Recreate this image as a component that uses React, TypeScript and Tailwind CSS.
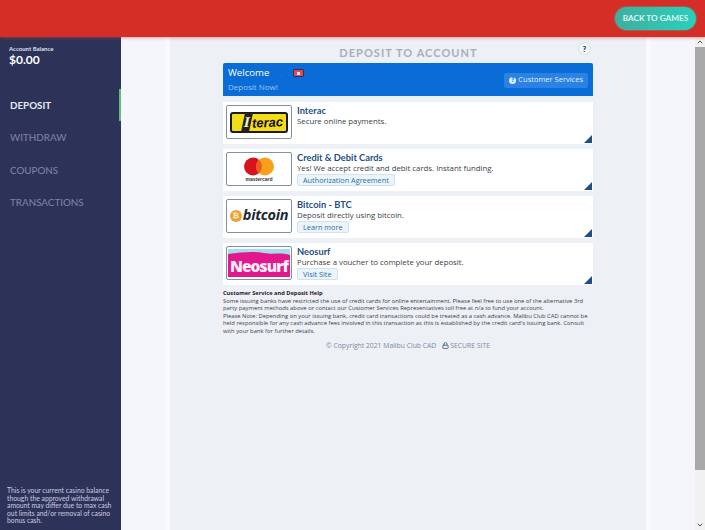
import React from 'react';
import { Lock, ChevronUp, ChevronDown } from 'lucide-react';

const navItems = [
  { label: 'DEPOSIT', active: true },
  { label: 'WITHDRAW', active: false },
  { label: 'COUPONS', active: false },
  { label: 'TRANSACTIONS', active: false },
];

const InteracLogo = () => (
  <div className="flex h-[21px] w-[58px] items-center justify-center gap-[1px] rounded-[3px] border-2 border-[#1b1b1b] bg-[#f5dc18] pl-[9px]">
    <span className="relative z-10 -my-[2px] flex h-[19px] w-[8px] shrink-0 -skew-x-12 items-center justify-center bg-[#222] font-['Liberation_Serif',serif] text-[15px] leading-none font-bold text-[#f4f0c0]">I</span>
    <span className="-rotate-3 font-['Liberation_Sans',sans-serif] text-[13px] leading-none font-bold text-[#111] italic">terac</span>
  </div>
);

const MastercardLogo = () => (
  <div className="flex flex-col items-center">
    <svg width="32" height="19" viewBox="0 0 32 19">
      <circle cx="10" cy="9.5" r="9" fill="#d6141c" />
      <circle cx="22" cy="9.5" r="9" fill="#f7a01b" />
      <path d="M16 2.8a9 9 0 0 1 0 13.4a9 9 0 0 1 0-13.4z" fill="#ee5a1c" />
    </svg>
    <span className="mt-[1px] font-['Liberation_Sans',sans-serif] text-[5px] leading-none font-bold text-[#333]">mastercard</span>
  </div>
);

const BitcoinLogo = () => (
  <div className="flex items-center gap-[1px]">
    <div className="flex h-[12px] w-[12px] items-center justify-center rounded-full bg-[#e8a33d] font-['Liberation_Sans',sans-serif] text-[8px] leading-none font-bold text-[#fbe6c2]">₿</div>
    <span className="-mt-[1px] font-['Open_Sans',sans-serif] text-[14.5px] leading-none font-bold tracking-[-0.3px] text-[#1d2a33] italic">bitcoin</span>
  </div>
);

const NeosurfLogo = () => (
  <div className="flex h-[28px] w-[62px] flex-col overflow-hidden">
    <svg width="62" height="12" viewBox="0 0 62 12" className="shrink-0">
      <rect width="62" height="12" fill="#e2188c" />
      <path d="M0 0H62V6C52 3 46 6 36 4C26 2 14 3 0 5Z" fill="#a8dcec" />
    </svg>
    <div className="flex flex-1 items-start justify-center bg-[#e2188c]">
      <span className="-mt-[5px] font-['Open_Sans',sans-serif] text-[15.5px] leading-[20px] font-extrabold tracking-[-0.9px] text-[#fdeef7]">Neosurf</span>
    </div>
  </div>
);

const methods = [
  { title: 'Interac', text: 'Secure online payments.', logo: <InteracLogo />, button: '' },
  { title: 'Credit & Debit Cards', text: 'Yes! We accept credit and debit cards. Instant funding.', logo: <MastercardLogo />, button: 'Authorization Agreement' },
  { title: 'Bitcoin - BTC', text: 'Deposit directly using bitcoin.', logo: <BitcoinLogo />, button: 'Learn more' },
  { title: 'Neosurf', text: 'Purchase a voucher to complete your deposit.', logo: <NeosurfLogo />, button: 'Visit Site' },
];

export default function App() {
  return (
    <div className="flex h-[530px] w-[705px] flex-col overflow-hidden bg-[#f4f6fb] font-['Open_Sans',sans-serif]">
      {/* Header */}
      <header className="relative z-10 flex h-[37px] shrink-0 items-center justify-end bg-[#d42e27] pr-[9px] shadow-[0_1px_3px_rgba(200,80,70,0.5)]">
        <button className="h-[23px] w-[81px] rounded-full bg-gradient-to-r from-[#3fae9e] to-[#27d0bd] text-center font-['Lato',sans-serif] text-[8.2px] font-bold text-[#dff7f3] shadow-[0_0_0_1px_rgba(120,130,110,0.6)]">
          BACK TO GAMES
        </button>
      </header>

      <div className="flex min-h-0 flex-1">
        {/* Sidebar */}
        <aside className="flex w-[121px] shrink-0 flex-col justify-between bg-[#2d3258] font-['Lato',sans-serif]">
          <div>
            <div className="pt-[8px] pl-[9px]">
              <div className="text-[6px] leading-[7px] font-bold text-[#dfe2ee]">Account Balance</div>
              <div className="text-[12px] leading-[16px] font-bold text-white">$0.00</div>
            </div>
            <nav className="mt-[21px]">
              {navItems.map((item) => (
                <div
                  key={item.label}
                  className={`flex h-[32.4px] items-center pl-[10px] text-[9.8px] ${
                    item.active ? 'border-r-2 border-[#62bd78] font-bold text-[#e8eaf2]' : 'font-medium text-[#7c80a0]'
                  }`}
                >
                  {item.label}
                </div>
              ))}
            </nav>
          </div>
          <p className="pr-[8px] pb-[5px] pl-[7px] text-[6.8px] leading-[7.6px] text-[#c9cce0]">
            This is your current casino balance though the approved withdrawal amount may differ due to max cash out limits and/or removal of casino bonus cash.
          </p>
        </aside>

        {/* Main */}
        <main className="min-w-0 flex-1 pl-[44px]">
          <div className="h-full w-[486px] border-x-[5px] border-[#f9fafd] bg-[#edf0f5] px-[53px]">
            <div className="flex h-[26px] items-center justify-center">
              <h1 className="relative w-full pt-[7px] pl-[1px] text-center font-['Lato',sans-serif] text-[11px] font-bold tracking-[1.05px] text-[#a6afc0]">
                DEPOSIT TO ACCOUNT
                <span className="absolute top-[4px] right-[2px] flex h-[13px] w-[13px] items-center justify-center rounded-full border border-[#cfe0ee] bg-[#f4f8fb] text-[8px] font-extrabold tracking-normal text-[#33507a]">?</span>
              </h1>
            </div>

            <div className="flex h-[33px] items-center justify-between rounded-t-[2px] bg-[#0a6cd6] px-[5px]">
              <div>
                <div className="flex items-center">
                  <span className="w-[41px] text-[9.6px] leading-[14px] whitespace-nowrap text-white">Welcome</span>
                  <span className="mt-[6px] ml-[16px] h-[2px] w-[2px] bg-[#2b5d9c]" />
                  <span className="mt-[1px] ml-[6px] flex h-[8px] w-[11px] items-center justify-center rounded-[1px] border border-[#23306a] bg-[#e8474c]">
                    <span className="h-[3px] w-[3px] bg-white" />
                  </span>
                </div>
                <div className="text-[8px] leading-[14px] text-[#9cc7f3]">Deposit Now!</div>
              </div>
              <div className="mt-[1px] flex h-[15px] items-center gap-[2px] rounded-[2px] bg-[#2a82e4] px-[5px] text-[7.5px] text-[#e3f0fc]">
                <span className="flex h-[7px] w-[7px] items-center justify-center rounded-full bg-[#e3f0fc] text-[6px] leading-none font-extrabold text-[#2a82e4]">?</span>
                Customer Services
              </div>
            </div>

            <div className="mt-[6px] flex flex-col gap-[5px]">
              {methods.map((m) => (
                <div key={m.title} className="relative flex h-[42px] items-start bg-white pt-[3px] pl-[3px]">
                  <div className="flex h-[34px] w-[66px] shrink-0 items-center justify-center rounded-[2px] border border-[#7f93a3] bg-white">
                    {m.logo}
                  </div>
                  <div className="ml-[5px] min-w-0">
                    <div className="font-['Lato',sans-serif] text-[9.3px] leading-[11px] font-bold text-[#1f4f7f]">{m.title}</div>
                    <div className="text-[7.8px] leading-[10px] text-[#3a4148]">{m.text}</div>
                    {m.button && (
                      <div className="mt-[1px] w-fit rounded-[2px] border border-[#cfe2f0] bg-[#ebf4fb] px-[5px] text-[7.3px] leading-[10px] text-[#2f6f9f]">
                        {m.button}
                      </div>
                    )}
                  </div>
                  <span className="absolute right-[1px] bottom-[1px] h-0 w-0 border-b-[8px] border-l-[8px] border-b-[#1f4f86] border-l-transparent" />
                </div>
              ))}
            </div>

            <div className="mt-[5px] text-[5.85px] leading-[7.6px] text-[#3a3f46]">
              <div className="text-[5.7px] font-bold text-[#1f2328]">Customer Service and Deposit Help</div>
              <p>Some issuing banks have restricted the use of credit cards for online entertainment. Please feel free to use one of the alternative 3rd party payment methods above or contact our Customer Services Representatives toll free at n/a to fund your account.</p>
              <p>Please Note: Depending on your issuing bank, credit card transactions could be treated as a cash advance. Malibu Club CAD cannot be held responsible for any cash advance fees involved in this transaction as this is established by the credit card's issuing bank. Consult with your bank for further details.</p>
            </div>

            <div className="mt-[5px] flex items-center justify-center gap-[6px] text-[6.8px] leading-[9px] text-[#7a8ca3]">
              <span>© Copyright 2021 Malibu Club CAD</span>
              <span className="flex items-center gap-[1px]">
                <Lock size={7} strokeWidth={3} className="text-[#4a6285]" />
                SECURE SITE
              </span>
            </div>
          </div>
        </main>

        {/* Scrollbar */}
        <div className="flex w-[10px] shrink-0 flex-col items-center bg-[#f1f1f1] text-[#505050]">
          <div className="flex h-[10px] items-center justify-center"><ChevronUp size={8} strokeWidth={3} /></div>
          <div className="h-[423px] w-full bg-[#a8a8a8]" />
          <div className="flex flex-1 items-end justify-center pb-[1px]"><ChevronDown size={8} strokeWidth={3} /></div>
        </div>
      </div>
    </div>
  );
}
